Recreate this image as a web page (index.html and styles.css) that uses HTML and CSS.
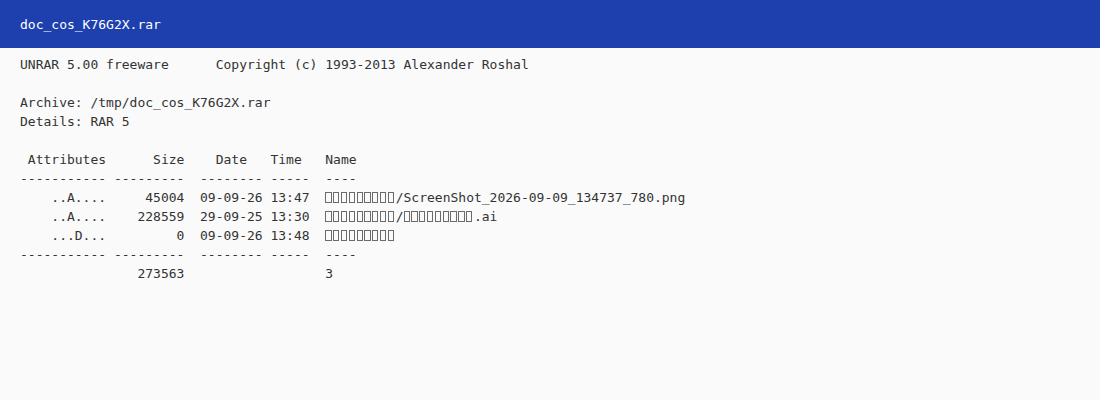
FILE: index.html
```html
<!DOCTYPE html>
<html>
<head>
<meta charset="utf-8">
<link rel="stylesheet" href="styles.css">
</head>
<body>
<header class="bar"><span class="title">doc_cos_K76G2X.rar</span></header>
<main class="content">
<pre class="listing">UNRAR 5.00 freeware      Copyright (c) 1993-2013 Alexander Roshal

Archive: /tmp/doc_cos_K76G2X.rar
Details: RAR 5

 Attributes      Size    Date   Time   Name
----------- ---------  -------- -----  ----
    ..A....     45004  09-09-26 13:47  <span class="tofu"><i></i><i></i><i></i><i></i><i></i><i></i><i></i><i></i><i></i></span>/ScreenShot_2026-09-09_134737_780.png
    ..A....    228559  29-09-25 13:30  <span class="tofu"><i></i><i></i><i></i><i></i><i></i><i></i><i></i><i></i><i></i></span>/<span class="tofu"><i></i><i></i><i></i><i></i><i></i><i></i><i></i><i></i><i></i></span>.ai
    ...D...         0  09-09-26 13:48  <span class="tofu"><i></i><i></i><i></i><i></i><i></i><i></i><i></i><i></i><i></i></span>
----------- ---------  -------- -----  ----
               273563                  3</pre>
</main>
</body>
</html>
```
FILE: styles.css
```css
html, body {
  margin: 0;
  padding: 0;
  background: #fafafa;
}
body {
  font-family: "DejaVu Sans Mono", monospace;
  font-size: 13px;
  color: #333;
}
.bar {
  height: 48px;
  background: #1e40af;
  color: #fff;
  display: flex;
  align-items: center;
  padding: 0 20px;
  box-sizing: border-box;
}
.title {
  font-size: 13px;
}
.content {
  padding: 7px 20px;
}
.listing {
  margin: 0;
  font-family: "DejaVu Sans Mono", monospace;
  font-size: 13px;
  line-height: 19px;
  color: #333;
  white-space: pre;
}
.tofu {
  display: inline-block;
  width: 9ch;
  white-space: nowrap;
  vertical-align: baseline;
  line-height: 0;
}
.tofu i {
  display: inline-block;
  box-sizing: border-box;
  width: calc(1ch - 1.5px);
  margin-right: 1.5px;
  height: 11px;
  border: 1px solid #6b6b6b;
  vertical-align: -1px;
}
```
